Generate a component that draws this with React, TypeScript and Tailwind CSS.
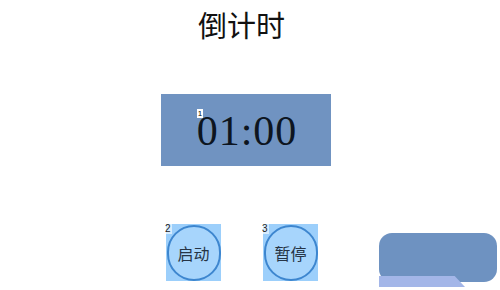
import React from "react";

const cjk = { fontFamily: '"Noto Sans CJK SC", "Noto Sans", sans-serif' };

function RoundBtn({ n, label, ml }: { n: string; label: string; ml: string }) {
  return (
    <div className={`relative w-[55px] h-[57px] bg-[#9ccffb] ${ml} flex items-center justify-center`}>
      <div className="w-[54px] h-[56px] rounded-full border-[2.5px] border-[#3d86cf] bg-[#a7d5fc] flex items-center justify-center">
        <span className="text-[16px] leading-none text-[#263445]" style={cjk}>{label}</span>
      </div>
      <span
        className="absolute left-[-2px] top-[0px] text-[10px] leading-none text-[#222] px-[1px] bg-white/60"
        style={{ fontFamily: '"Liberation Sans", sans-serif' }}
      >
        {n}
      </span>
    </div>
  );
}

export default function App() {
  return (
    <div className="w-[500px] h-[290px] bg-white overflow-hidden flex flex-col">
      <div className="ml-[198px] mt-[5px] text-[29px] leading-[38px] text-[#111]" style={cjk}>
        倒计时
      </div>
      <div className="ml-[161px] mt-[51px] w-[170px] h-[72px] bg-[#7093c1] flex items-center justify-center">
        <div className="relative pt-[2px] ml-[2px]">
          <span
            className="text-[42px] leading-none text-[#0d1520] tracking-[1px]"
            style={{ fontFamily: '"Liberation Serif", serif' }}
          >
            01:00
          </span>
          <span
            className="absolute left-[0px] top-[1px] bg-white text-[8px] leading-[9px] px-[1px] text-black"
            style={{ fontFamily: '"Liberation Sans", sans-serif' }}
          >
            1
          </span>
        </div>
      </div>
      <div className="flex items-start mt-[58px]">
        <RoundBtn n="2" label="启动" ml="ml-[166px]" />
        <RoundBtn n="3" label="暂停" ml="ml-[42px]" />
        <div className="relative ml-[61px] mt-[9px] w-[118px] h-[56px]">
          <div className="absolute left-0 top-0 w-[118px] h-[49px] bg-[#6e92c1] rounded-[13px]" />
          <div className="absolute left-0 top-[43px] w-[86px] h-[11px] bg-[#a3b6e8] [clip-path:polygon(0_0,88%_0,100%_100%,0_100%)]" />
        </div>
      </div>
    </div>
  );
}
